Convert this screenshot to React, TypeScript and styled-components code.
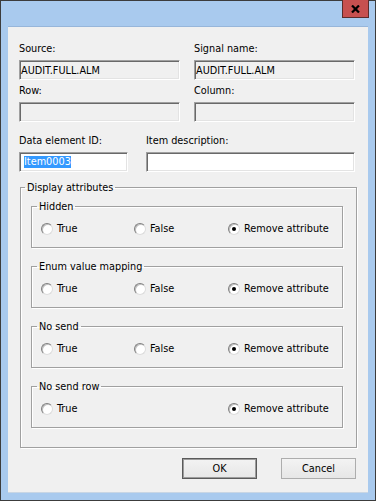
import styled, { createGlobalStyle } from "styled-components";

const GlobalStyle = createGlobalStyle`
  * {
    box-sizing: border-box;
  }
  html,
  body {
    margin: 0;
    padding: 0;
    background: #a9caee;
  }
  body {
    font-family: "DejaVu Sans Condensed", "DejaVu Sans", sans-serif;
    font-size: 10.8px;
    color: #000;
  }
`;

const Window = styled.div`
  width: 376px;
  height: 501px;
  border: 1px solid #3c3c3c;
  background: #a9caee;
  display: flex;
  flex-direction: column;
`;

const TitleBar = styled.div`
  height: 25px;
  flex: none;
  display: flex;
  justify-content: flex-end;
  align-items: flex-start;
  padding-right: 6px;
`;

const CloseButton = styled.div`
  width: 27px;
  height: 18px;
  margin-top: -1px;
  background: #c75050;
  border: 1px solid #5c2c2c;
  border-top: none;
  display: flex;
  align-items: center;
  justify-content: center;
`;

const Client = styled.div`
  flex: 1;
  margin: 0 7px 7px;
  background: #f0f0f0;
  border-top: 1px solid #97b6da;
  border-bottom: 1px solid #c9d6e4;
  padding: 15px 13px 0 11px;
`;

const FieldGrid = styled.div<{ $cols: string; $gap: number }>`
  display: grid;
  grid-template-columns: ${p => p.$cols};
  column-gap: ${p => p.$gap}px;
  row-gap: 4px;
  & + & {
    margin-top: 12px;
  }
`;

const Field = styled.div`
  display: flex;
  flex-direction: column;
`;

const Label = styled.div`
  line-height: 13px;
  margin-bottom: 5px;
  white-space: nowrap;
`;

const TextBox = styled.div<{ $readOnly?: boolean }>`
  height: 20px;
  border: 1px solid;
  border-color: #a0a0a0 #ffffff #ffffff #a0a0a0;
  box-shadow: inset 1px 1px 0 #696969, inset -1px -1px 0 #e3e3e3;
  background: ${p => (p.$readOnly ? "#f0f0f0" : "#ffffff")};
  padding: 0 ${p => (p.$readOnly ? "1px" : "4px")};
  display: flex;
  align-items: center;
  white-space: nowrap;
  overflow: hidden;
`;

const Selected = styled.span`
  background: #3399ff;
  color: #fff;
  line-height: 12px;
`;

const Group = styled.fieldset<{ $outer?: boolean }>`
  margin: ${p => (p.$outer ? "9px -2px 0 1px" : "0")};
  padding: 0;
  min-width: 0;
  border: 1px solid #a0a0a0;
  box-shadow: inset 1px 1px 0 #ffffff, 1px 1px 0 #ffffff;
`;

const Caption = styled.legend<{ $indent: number }>`
  padding: 0 2px;
  margin-left: ${p => p.$indent}px;
  line-height: 13px;
`;

const OuterBody = styled.div`
  padding: 6px 13px 19px 10px;
  display: flex;
  flex-direction: column;
  gap: 12px;
`;

const RadioRow = styled.div`
  display: grid;
  grid-template-columns: 93px 94px auto;
  height: 16px;
  margin: 8px 0 10px;
  padding-left: 9px;
`;

const RadioOption = styled.label<{ $col: number }>`
  grid-column: ${p => p.$col};
  display: flex;
  align-items: center;
  gap: 4px;
  line-height: 16px;
  white-space: nowrap;
`;

const RadioDot = styled.span<{ $checked?: boolean }>`
  position: relative;
  width: 12px;
  height: 12px;
  flex: none;
  border-radius: 50%;
  background: #ffffff;
  border: 1px solid;
  border-color: #7f7f7f #dcdcdc #dcdcdc #7f7f7f;
  box-shadow: inset 1px 1px 0 #c0c0c0;
  &::after {
    content: "";
    display: ${p => (p.$checked ? "block" : "none")};
    position: absolute;
    left: 3px;
    top: 3px;
    width: 4px;
    height: 4px;
    border-radius: 50%;
    background: #000;
  }
`;

const ButtonRow = styled.div`
  display: flex;
  justify-content: flex-end;
  gap: 24px;
  margin: 10px -1px 0 0;
`;

const Button = styled.button<{ $default?: boolean }>`
  width: 75px;
  height: 21px;
  font: inherit;
  color: #000;
  padding: 0;
  background: linear-gradient(#f3f3f3, #e6e6e6);
  border: 1px solid ${p => (p.$default ? "#5a5a5a" : "#adadad")};
  box-shadow: ${p => (p.$default ? "inset 0 0 0 1px #9c9c9c" : "none")};
`;

type Attr = { name: string; hasFalse: boolean };

const attributes: Attr[] = [
  { name: "Hidden", hasFalse: true },
  { name: "Enum value mapping", hasFalse: true },
  { name: "No send", hasFalse: true },
  { name: "No send row", hasFalse: false },
];

function AttributeGroup({ attr }: { attr: Attr }) {
  return (
    <Group>
      <Caption $indent={5}>{attr.name}</Caption>
      <RadioRow>
        <RadioOption $col={1}>
          <RadioDot />
          True
        </RadioOption>
        {attr.hasFalse && (
          <RadioOption $col={2}>
            <RadioDot />
            False
          </RadioOption>
        )}
        <RadioOption $col={3}>
          <RadioDot $checked />
          Remove attribute
        </RadioOption>
      </RadioRow>
    </Group>
  );
}

export default function App() {
  return (
    <>
      <GlobalStyle />
      <Window>
        <TitleBar>
          <CloseButton>
            <svg width="9" height="8" viewBox="0 0 9 8">
              <path
                d="M1 0.5 L8 7.5 M8 0.5 L1 7.5"
                stroke="#000"
                strokeWidth="2.2"
                fill="none"
              />
            </svg>
          </CloseButton>
        </TitleBar>
        <Client>
          <FieldGrid $cols="161px 161px" $gap={14}>
            <Field>
              <Label>Source:</Label>
              <TextBox $readOnly>AUDIT.FULL.ALM</TextBox>
            </Field>
            <Field>
              <Label>Signal name:</Label>
              <TextBox $readOnly>AUDIT.FULL.ALM</TextBox>
            </Field>
            <Field>
              <Label>Row:</Label>
              <TextBox $readOnly />
            </Field>
            <Field>
              <Label>Column:</Label>
              <TextBox $readOnly />
            </Field>
          </FieldGrid>
          <FieldGrid $cols="109px 209px" $gap={18}>
            <Field>
              <Label>Data element ID:</Label>
              <TextBox>
                <Selected>Item0003</Selected>
              </TextBox>
            </Field>
            <Field>
              <Label>Item description:</Label>
              <TextBox />
            </Field>
          </FieldGrid>
          <Group $outer>
            <Caption $indent={4}>Display attributes</Caption>
            <OuterBody>
              {attributes.map(a => (
                <AttributeGroup key={a.name} attr={a} />
              ))}
            </OuterBody>
          </Group>
          <ButtonRow>
            <Button $default>OK</Button>
            <Button>Cancel</Button>
          </ButtonRow>
        </Client>
      </Window>
    </>
  );
}
